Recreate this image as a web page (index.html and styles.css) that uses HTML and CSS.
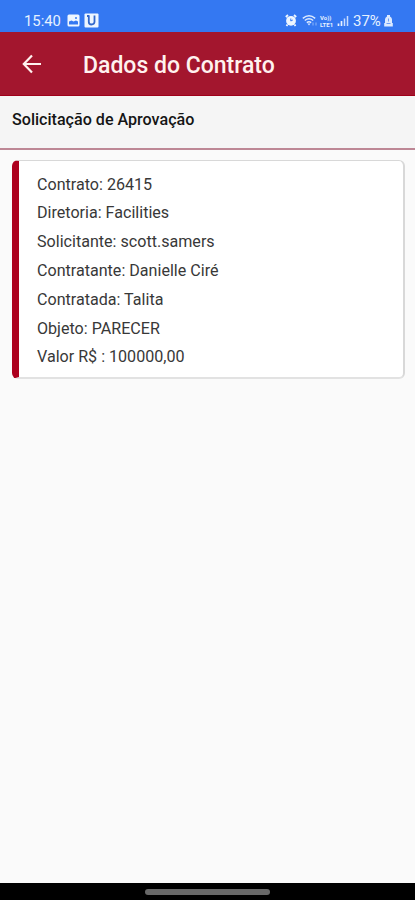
FILE: index.html
```html
<!DOCTYPE html>
<html lang="pt-BR">
<head>
<meta charset="utf-8">
<title>Dados do Contrato</title>
<link rel="stylesheet" href="styles.css">
</head>
<body>
<div class="status">
  <span class="time">15:40</span>
  <svg class="picture" width="13" height="13" viewBox="0 0 13 13"><rect x=".5" y=".5" width="12" height="12" rx="1.5" fill="#eef6ff"/><path d="M2 10.500V7.500l2.500-1 2 1L9 6.500l2 1v3z" fill="#3478f2"/><circle cx="9" cy="4" r="1" fill="#3478f2"/></svg>
  <svg class="app" width="15" height="15" viewBox="0 0 15 15"><rect x=".5" y=".5" width="14" height="14" rx="1" fill="#eef6ff"/><path d="M3 3h2.500M4.800 3v6q0 2.500 2.700 2.500T10.500 9V2.500" fill="none" stroke="#3268cc" stroke-width="1.800"/></svg>
  <span class="grow"></span>
  <svg class="alarm" width="12" height="13" viewBox="0 0 12 13"><circle cx="6" cy="6.800" r="4.900" fill="#eef6ff"/><path d="M.8 3 3 1M11.200 3 9 1M2.500 10.500 1.500 12M9.500 10.500l1 1.500" stroke="#eef6ff" stroke-width="1.800"/><path d="M5.800 4.500V7l2-1" fill="none" stroke="#3478f2"/></svg>
  <svg class="wifi" width="16" height="13" viewBox="0 0 16 13"><path d="M.8 4.300q6.200-5 12.400 0M2.800 6.500q4.200-3.300 8.400 0M4.800 8.600q2.200-1.700 4.400 0" fill="none" stroke="#dceaff" stroke-width="1.500"/><path d="M7 11.500 5.500 9.600h3z" fill="#dceaff"/><path d="M11 11.500V8.500M14 8.500v3" stroke="#8db6fa"/></svg>
  <span class="volte"><span>Vo))</span><span>LTE1</span></span>
  <svg class="signal" width="12" height="12" viewBox="0 0 12 12"><path d="M1.500 11V8.500M4.500 11V6" stroke="#e8f1ff" stroke-width="1.700"/><path d="M7.500 11V3.500M10.500 11V1" stroke="#c8dcff" stroke-width="1.500"/></svg>
  <span class="percent">37%</span>
  <svg class="battery" width="9" height="12" viewBox="0 0 9 12"><path d="M3 0h3v1.500q2 1 2 3V8h.8v3.500H.2V8H1V4.500q0-2 2-3z" fill="#dceaff"/><path d="M4.500 3.500v3M2.500 8.500h4" stroke="#6c9cf5"/></svg>
</div>
<header class="bar">
  <svg class="back" width="20" height="20" viewBox="0 0 20 20"><path d="M19 10H2M10 1.500 1.800 10 10 18.500" fill="none" stroke="#fff2ef" stroke-width="2.200"/></svg>
  <h1>Dados do Contrato</h1>
</header>
<h2 class="section">Solicitação de Aprovação</h2>
<main>
  <div class="card">
    <p>Contrato: 26415</p>
    <p>Diretoria: Facilities</p>
    <p>Solicitante: scott.samers</p>
    <p>Contratante: Danielle Ciré</p>
    <p>Contratada: Talita</p>
    <p>Objeto: PARECER</p>
    <p>Valor R$ : 100000,00</p>
  </div>
</main>
<footer class="nav"><div class="pill"></div></footer>
</body>
</html>
```
FILE: styles.css
```css
* { box-sizing: border-box; }
body {
  margin: 0;
  height: 900px;
  display: flex;
  flex-direction: column;
  background: #fafafa;
  font-family: Roboto, "Liberation Sans", sans-serif;
  color: #383838;
  overflow: hidden;
}
svg { display: block; flex: none; }
h1, h2, p { margin: 0; white-space: nowrap; }
.status {
  height: 32px;
  flex: none;
  display: flex;
  align-items: center;
  padding: 9px 22px 0 24px;
  background: #3478f2;
  color: #e6f1ff;
}
.time { font-size: 14.800px; line-height: 18px; width: 43px; }
.app { margin-left: 4px; }
.grow { flex: 1; }
.alarm { margin-right: 1px; }
.wifi { margin-left: 4px; }
.volte {
  width: 15px;
  margin-left: 2px;
  font-size: 6px;
  line-height: 7px;
  font-weight: 700;
  display: flex;
  flex-direction: column;
}
.signal { margin-left: 2px; }
.percent { margin-left: 4px; width: 30px; font-size: 15px; line-height: 18px; }
.battery { margin-left: 1px; }
.bar {
  height: 64px;
  flex: none;
  display: flex;
  align-items: center;
  padding-left: 22px;
  background: #a3162e;
  border-bottom: 1px solid #a0001a;
  color: #fff2ef;
}
.bar h1 { margin: 4px 0 0 41px; font-size: 23px; line-height: 28px; font-weight: 500; }
.section {
  height: 54px;
  flex: none;
  padding: 14px 12px 0;
  background: #f5f5f5;
  border-bottom: 2px solid #bd8795;
  font-size: 16.100px;
  line-height: 20px;
  font-weight: 500;
  color: #151515;
}
main { flex: 1; padding: 10px 10px 0 12px; }
.card {
  height: 219px;
  padding: 9.700px 0 0 18px;
  background: #fff;
  border: 2px solid #d8d8d8;
  border-top-width: 1px;
  border-left: 7px solid #ad001e;
  border-bottom-color: #e2e2e2;
  border-radius: 6px;
}
.card p { font-size: 16.100px; line-height: 28.800px; }
.nav {
  height: 17px;
  flex: none;
  background: #000;
  display: flex;
  justify-content: center;
  padding-top: 6px;
}
.pill { width: 125px; height: 6px; border-radius: 3px; background: #686868; }
```
